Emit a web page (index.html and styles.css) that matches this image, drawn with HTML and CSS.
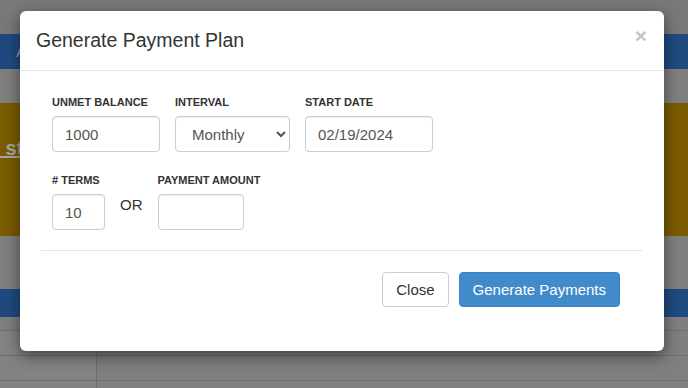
FILE: index.html
```html
<!DOCTYPE html>
<html lang="en">
<head>
  <meta charset="UTF-8">
  <meta name="viewport" content="width=device-width, initial-scale=1.0">
  <title>Generate Payment Plan</title>
  <link rel="stylesheet" href="styles.css">
</head>
<body>

  <div class="page">
    <div class="gap-top"></div>
    <div class="navbar"><span>All</span></div>
    <div class="gap-a"></div>
    <div class="alert"><a href="#">&nbsp;status</a></div>
    <div class="gap-b"></div>
    <div class="tabbar"></div>
    <div class="table">
      <div class="tr"><div class="td first"></div><div class="td"></div></div>
      <div class="tr"><div class="td first"></div><div class="td"></div></div>
      <div class="tr"><div class="td first"></div><div class="td"></div></div>
    </div>
  </div>

  <div class="modal">
    <div class="modal-header">
      <h4 class="modal-title">Generate Payment Plan</h4>
      <button type="button" class="close">&times;</button>
    </div>
    <div class="modal-body">
      <form class="plan-form">
        <div class="row">
          <div class="field">
            <label for="balance">UNMET BALANCE</label>
            <input type="text" id="balance" class="w-balance" value="1000">
          </div>
          <div class="field">
            <label for="interval">INTERVAL</label>
            <select id="interval" class="w-interval">
              <option selected>Monthly</option>
              <option>Weekly</option>
              <option>Bi-Weekly</option>
            </select>
          </div>
          <div class="field">
            <label for="start">START DATE</label>
            <input type="text" id="start" class="w-date" value="02/19/2024">
          </div>
        </div>
        <div class="row">
          <div class="field">
            <label for="terms"># TERMS</label>
            <input type="text" id="terms" class="w-terms" value="10">
          </div>
          <div class="or">OR</div>
          <div class="field">
            <label for="amount">PAYMENT AMOUNT</label>
            <input type="text" id="amount" class="w-amount">
          </div>
        </div>
      </form>
      <hr>
      <div class="modal-footer">
        <button type="button" class="btn">Close</button>
        <button type="button" class="btn btn-primary">Generate Payments</button>
      </div>
    </div>
  </div>

</body>
</html>
```

FILE: styles.css
```css
body {
  margin: 0;
  font-family: "Liberation Sans", Arial, sans-serif;
  background-color: #7f7f7f;
  color: #333;
  overflow: hidden;
}

/* page behind the dialog, already dimmed */
.page {
  height: 388px;
}
.gap-top {
  height: 34px;
  background-color: #797979;
}
.navbar {
  height: 35px;
  padding-left: 16px;
  background-color: #1f4a80;
  color: #8d9cb3;
  font-size: 15px;
  line-height: 35px;
}
.gap-a {
  height: 34px;
}
.alert {
  height: 133px;
  box-sizing: border-box;
  padding-top: 33px;
  background-color: #7b5b00;
  line-height: 24px;
}
.alert a {
  color: #a6a6a6;
  font-size: 20px;
  font-weight: bold;
}
.gap-b {
  height: 53px;
}
.tabbar {
  height: 28px;
  background-color: #1f4a80;
}
.table {
  margin-top: 13px;
  border-top: 1px solid #6f6f6f;
}
.tr {
  display: flex;
  height: 24px;
  border-bottom: 1px solid #6f6f6f;
}
.td.first {
  width: 96px;
  border-right: 1px solid #6f6f6f;
  background-color: #838383;
}

/* dialog */
.modal {
  position: absolute;
  top: 11px;
  left: 20px;
  width: 644px;
  background-color: #fff;
  border-radius: 6px;
  box-shadow: 0 5px 15px rgba(0, 0, 0, 0.5);
}
.modal-header {
  display: flex;
  align-items: flex-start;
  padding: 18px 17px 19px 16px;
  border-bottom: 1px solid #e5e5e5;
}
.modal-title {
  margin: 0;
  font-size: 19.5px;
  font-weight: normal;
  line-height: 22px;
  color: #333;
}
.close {
  margin-left: auto;
  margin-top: -4px;
  padding: 0;
  border: none;
  background: none;
  font-family: inherit;
  font-size: 21px;
  font-weight: bold;
  line-height: 21px;
  color: #c4c4c4;
}
.modal-body {
  padding: 24px 22px 44px 21px;
}
.plan-form {
  padding: 0 11px;
}
.row {
  display: flex;
  gap: 15px;
}
.row + .row {
  margin-top: 21px;
}
label {
  display: block;
  margin-bottom: 6px;
  font-size: 11px;
  font-weight: bold;
  line-height: 15px;
  color: #333;
}
input,
select {
  box-sizing: border-box;
  height: 36px;
  margin: 0;
  padding: 6px 12px;
  font-family: inherit;
  font-size: 15px;
  color: #555;
  background-color: #fff;
  border: 1px solid #ccc;
  border-radius: 4px;
  box-shadow: inset 0 1px 1px rgba(0, 0, 0, 0.075);
}
.w-balance { width: 108px; }
.w-interval { width: 115px; }
.w-date { width: 128px; }
.w-terms { width: 53px; }
.w-amount { width: 86px; }

.or {
  padding-top: 21px;
  font-size: 15px;
  line-height: 21px;
  color: #333;
}
hr {
  margin: 20px 0 0;
  border: 0;
  border-top: 1px solid #e5e5e5;
}
.modal-footer {
  display: flex;
  justify-content: flex-end;
  gap: 10px;
  padding: 21px 22px 0 0;
}
.btn {
  padding: 6px 13px;
  font-family: inherit;
  font-size: 15px;
  line-height: 21px;
  color: #333;
  background-color: #fff;
  border: 1px solid #ccc;
  border-radius: 4px;
  cursor: pointer;
}
.btn-primary {
  color: #fff;
  background-color: #428bca;
  border-color: #3c83c2;
}
```
